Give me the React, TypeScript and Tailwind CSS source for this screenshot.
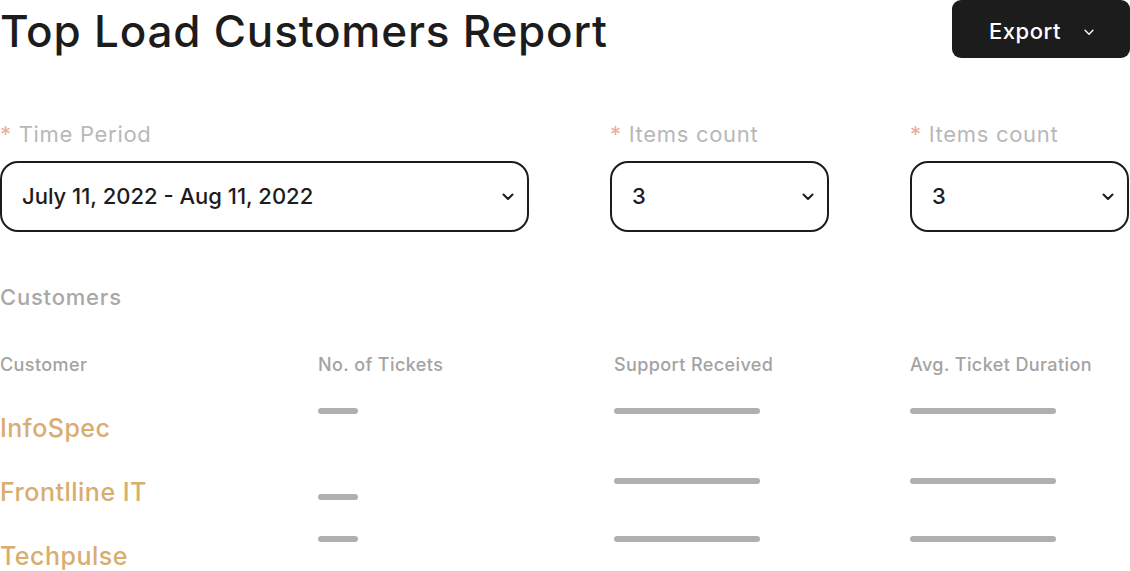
import React from "react";

const font = { fontFamily: "Inter, 'Noto Sans', sans-serif" };

function Chevron({ className, w = 2 }: { className?: string; w?: number }) {
  return (
    <svg viewBox="0 0 12 8" className={className} fill="none" stroke="currentColor" strokeWidth={w} strokeLinecap="round" strokeLinejoin="round">
      <path d="M1.5 1.5 L6 6 L10.5 1.5" />
    </svg>
  );
}

function Field({ label, value }: { label: string; value: string }) {
  return (
    <div className="flex flex-col">
      <div className="h-[28px] text-[22px] leading-[28px] tracking-[0.7px] text-[#b8b8b8]">
        <span className="text-[#f2a999]">*</span> {label}
      </div>
      <div className="mt-[13px] flex h-[71px] items-center justify-between rounded-[18px] border-2 border-[#1c1c1c] pl-5 pr-[13px]">
        <span className="text-[22px] font-medium text-[#1c1c1c]">{value}</span>
        <Chevron className="h-[8px] w-[12px] text-[#1c1c1c]" />
      </div>
    </div>
  );
}

const rows = [
  { name: "InfoSpec", t: "mt-[8px]", s: "mt-[8px]", a: "mt-[8px]" },
  { name: "Frontlline IT", t: "mt-[30px]", s: "mt-[14px]", a: "mt-[14px]" },
  { name: "Techpulse", t: "mt-[8px]", s: "mt-[8px]", a: "mt-[8px]" },
];

export default function App() {
  return (
    <div className="w-[1130px] bg-white text-[#1c1c1c]" style={font}>
      <div className="flex items-start justify-between">
        <h1 className="h-[60px] pt-[1px] text-[44px] font-medium leading-[60px] tracking-[0.8px] text-[#1c1c1c]">
          Top Load Customers Report
        </h1>
        <button className="flex h-[58px] w-[178px] items-center justify-center gap-[22px] rounded-[9px] bg-[#1c1c1c] pl-[2px] pt-[4px] text-[22px] font-medium tracking-[0.5px] text-white">
          Export
          <Chevron className="mt-[2px] h-[7px] w-[12px] text-white" w={1.6} />
        </button>
      </div>

      <div className="mt-[60px] grid grid-cols-[529px_219px_219px] gap-x-[81px]">
        <Field label="Time Period" value="July 11, 2022 - Aug 11, 2022" />
        <Field label="Items count" value="3" />
        <Field label="Items count" value="3" />
      </div>

      <div className="mt-[53px] h-[24px] text-[22px] font-medium leading-[24px] tracking-[0.8px] text-[#a8a8a8]">
        Customers
      </div>

      <div className="mt-[46px] grid h-[20px] grid-cols-[318px_296px_296px_1fr] text-[18px] font-medium leading-[20px] tracking-[0.4px] text-[#a3a3a3]">
        <div>Customer</div>
        <div>No. of Tickets</div>
        <div>Support Received</div>
        <div>Avg. Ticket Duration</div>
      </div>

      <div className="mt-[25px] flex flex-col">
        {rows.map((r) => (
          <div key={r.name} className="grid h-[64px] grid-cols-[318px_296px_296px_1fr] items-start">
            <div className="mt-[13px] text-[25px] font-medium leading-[30px] tracking-[0.5px] text-[#d8ad70]">{r.name}</div>
            <div className={`${r.t} h-[6px] w-[40px] rounded-full bg-[#b0b0b0]`} />
            <div className={`${r.s} h-[6px] w-[146px] rounded-full bg-[#b0b0b0]`} />
            <div className={`${r.a} h-[6px] w-[146px] rounded-full bg-[#b0b0b0]`} />
          </div>
        ))}
      </div>
    </div>
  );
}
